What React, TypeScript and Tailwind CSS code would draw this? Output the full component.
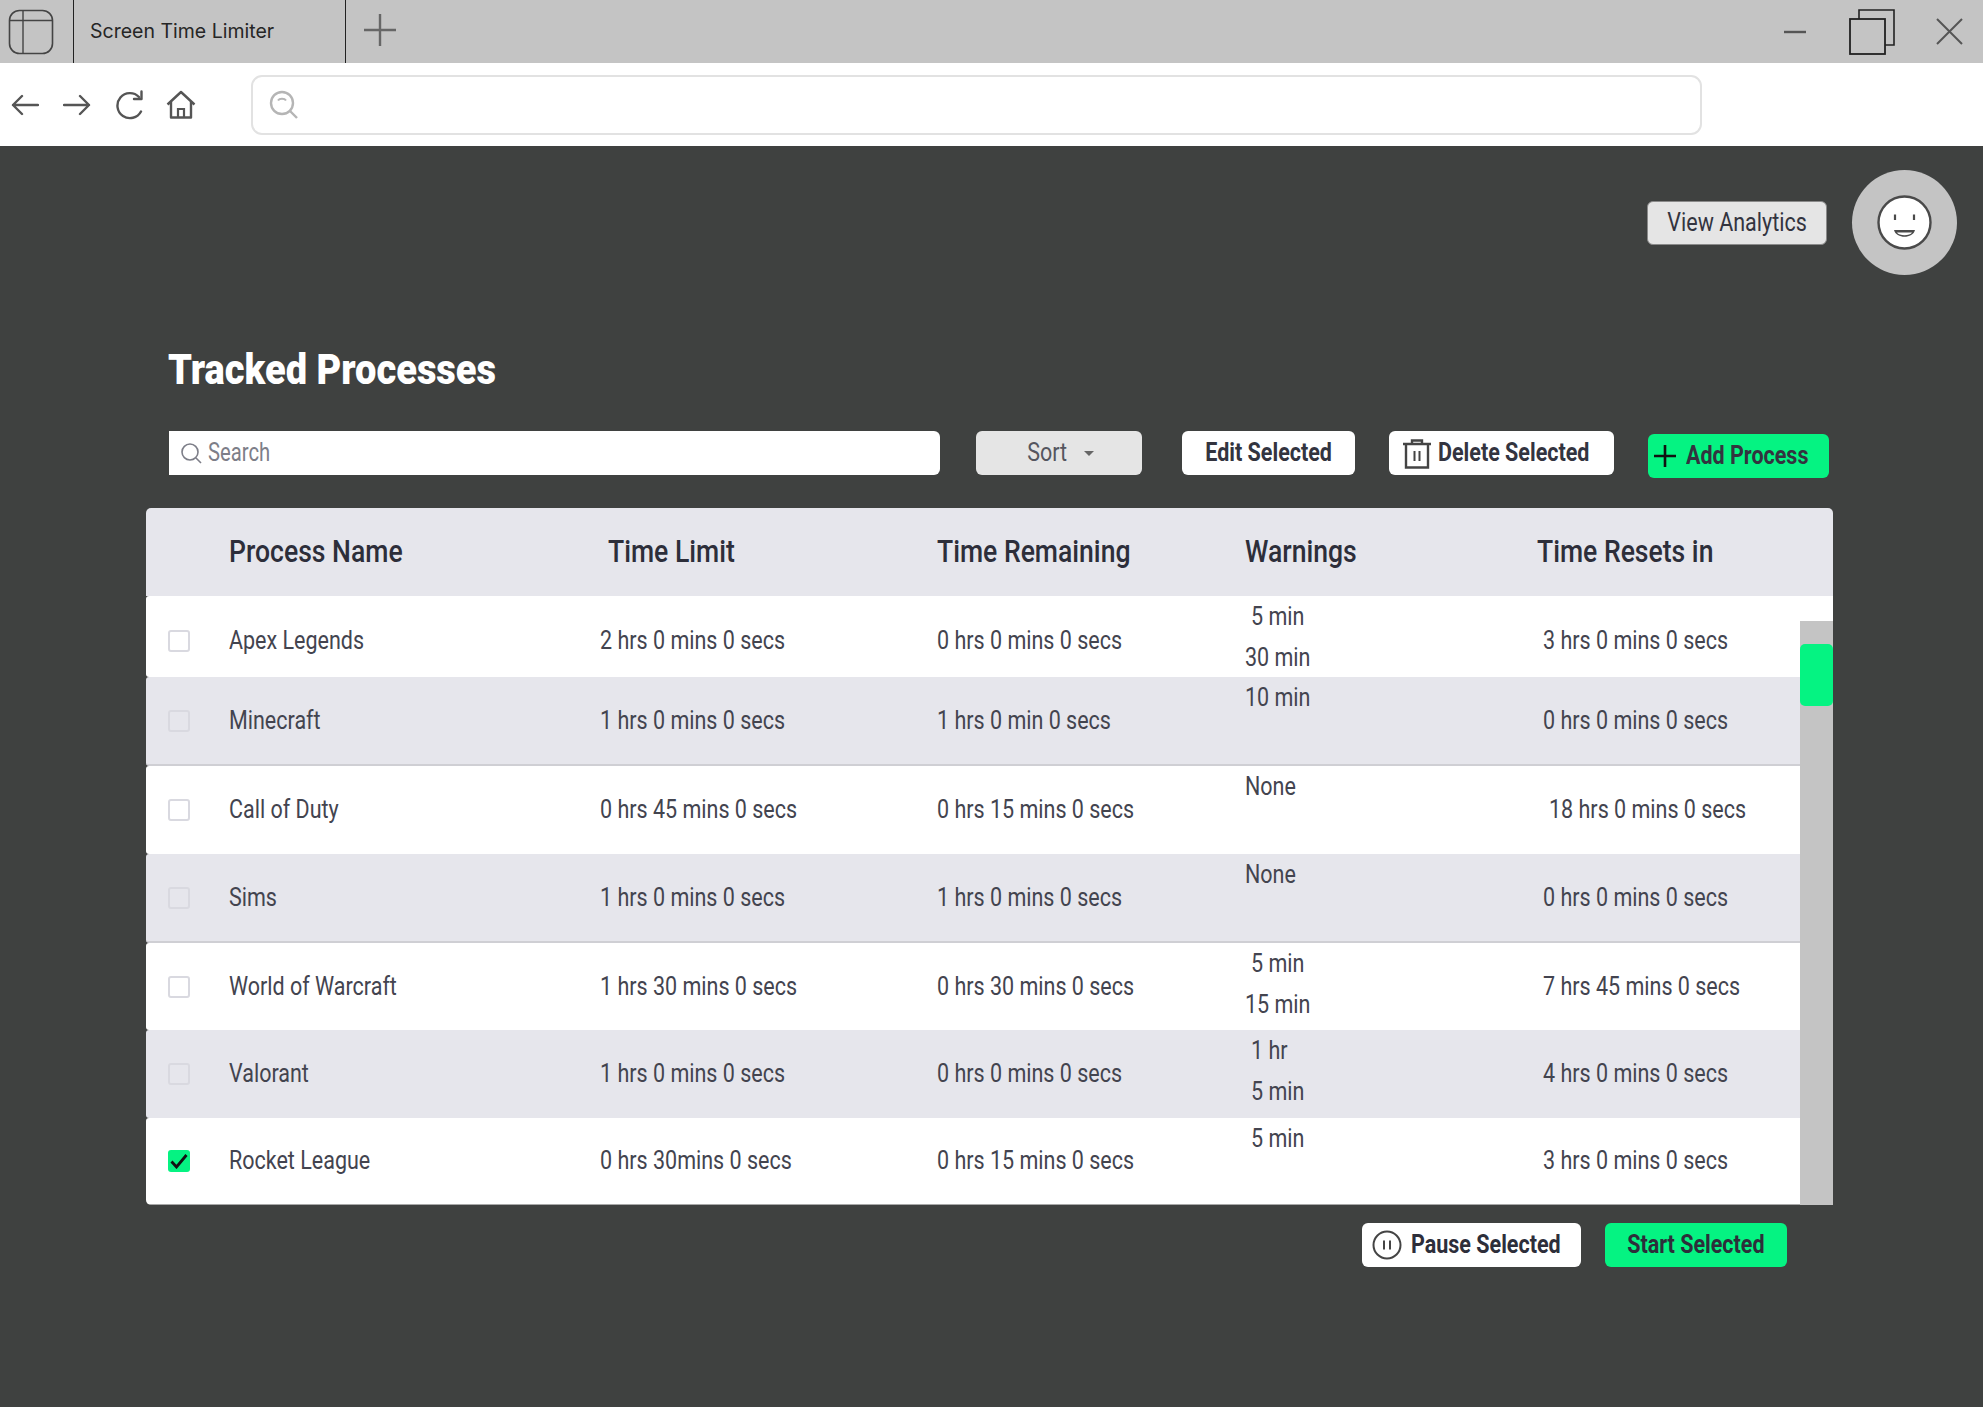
import React from "react";

const rows = [
  { name: "Apex Legends", limit: "2 hrs 0 mins 0 secs", rem: "0 hrs 0 mins 0 secs", warn: ["5 min", "30 min"], reset: "3 hrs 0 mins 0 secs", h: "h-[81px]", bg: "bg-white", drop: "pt-[8px]" },
  { name: "Minecraft", limit: "1 hrs 0 mins 0 secs", rem: "1 hrs 0 min 0 secs", warn: ["10 min"], reset: "0 hrs 0 mins 0 secs", h: "h-[89px]", bg: "bg-[#e6e6ec] border-b-2 border-[#cfcfd4]" },
  { name: "Call of Duty", limit: "0 hrs 45 mins 0 secs", rem: "0 hrs 15 mins 0 secs", warn: ["None"], reset: "18 hrs 0 mins 0 secs", h: "h-[88px]", bg: "bg-white", resetIndent: "pl-[6px]" },
  { name: "Sims", limit: "1 hrs 0 mins 0 secs", rem: "1 hrs 0 mins 0 secs", warn: ["None"], reset: "0 hrs 0 mins 0 secs", h: "h-[89px]", bg: "bg-[#e6e6ec] border-b-2 border-[#cfcfd4]" },
  { name: "World of Warcraft", limit: "1 hrs 30 mins 0 secs", rem: "0 hrs 30 mins 0 secs", warn: ["5 min", "15 min"], reset: "7 hrs 45 mins 0 secs", h: "h-[87px]", bg: "bg-white" },
  { name: "Valorant", limit: "1 hrs 0 mins 0 secs", rem: "0 hrs 0 mins 0 secs", warn: ["1 hr", "5 min"], reset: "4 hrs 0 mins 0 secs", h: "h-[88px]", bg: "bg-[#e6e6ec]" },
  { name: "Rocket League", limit: "0 hrs 30mins 0 secs", rem: "0 hrs 15 mins 0 secs", warn: ["5 min"], reset: "3 hrs 0 mins 0 secs", h: "h-[87px]", bg: "bg-white border-b border-[#a8a8a8]", checked: true },
];

const cols = "grid grid-cols-[83px_371px_337px_308px_298px_1fr]";

function Icon({ w, h, vb, className, children }: { w: number; h: number; vb: string; className?: string; children: React.ReactNode }) {
  return (
    <svg width={w} height={h} viewBox={vb} fill="none" stroke="currentColor" className={`shrink-0 ${className ?? ""}`}>
      {children}
    </svg>
  );
}

/* The reference face is a condensed one; Roboto is narrowed to its widths. */
function Row({ children }: { children: React.ReactNode }) {
  return <span className="inline-block whitespace-nowrap origin-left scale-x-[0.86]">{children}</span>;
}
function Head({ children }: { children: React.ReactNode }) {
  return <span className="inline-block whitespace-nowrap origin-left scale-x-[0.83]">{children}</span>;
}
function Btn({ children, left }: { children: React.ReactNode; left?: boolean }) {
  return <span className={`inline-block whitespace-nowrap scale-x-[0.86] ${left ? "origin-left" : "origin-center"}`}>{children}</span>;
}

export default function App() {
  return (
    <div className="flex flex-col h-[1407px] w-[1983px] overflow-hidden bg-[#3f4140] font-['Roboto',sans-serif]">
      {/* title bar */}
      <div className="h-[63px] shrink-0 bg-[#c4c4c4] flex items-center text-[#333]">
        <Icon w={46} h={46} vb="0 0 46 46" className="ml-[8px] text-[#444]">
          <rect x="1.5" y="1.5" width="43" height="43" rx="10" strokeWidth="1.6" />
          <path d="M1.5 11.5H44.5M15 1.5V44.5" strokeWidth="1.4" />
        </Icon>
        <div className="ml-[19px] h-full w-[273px] border-x border-[#222] flex items-center pl-[16px] font-['Inter',sans-serif] text-[19.5px] text-[#262626] whitespace-nowrap">
          Screen Time Limiter
        </div>
        <Icon w={32} h={32} vb="0 0 32 32" className="ml-[18px] -mt-[3px] text-[#666]">
          <path d="M16 0V32M0 16H32" strokeWidth="2.4" />
        </Icon>
        <div className="ml-auto flex items-center pr-[20px]">
          <Icon w={24} h={4} vb="0 0 24 4" className="text-[#555]">
            <path d="M1 2H23" strokeWidth="2.4" />
          </Icon>
          <Icon w={47} h={46} vb="0 0 47 46" className="ml-[42px] text-[#222]">
            <path d="M10 10V1H45V36H36" strokeWidth="1.6" />
            <rect x="1" y="10" width="35" height="35" strokeWidth="1.8" />
          </Icon>
          <Icon w={27} h={27} vb="0 0 27 27" className="ml-[40px] text-[#555]">
            <path d="M1 1L26 26M26 1L1 26" strokeWidth="2" />
          </Icon>
        </div>
      </div>

      {/* nav bar */}
      <div className="h-[83px] shrink-0 bg-white flex items-center text-[#555]">
        <Icon w={28} h={22} vb="0 0 28 22" className="ml-[11px]">
          <path d="M27 11H2M11 2L2 11L11 20" strokeWidth="2.4" strokeLinecap="round" strokeLinejoin="round" />
        </Icon>
        <Icon w={28} h={22} vb="0 0 28 22" className="ml-[24px]">
          <path d="M1 11H26M17 2L26 11L17 20" strokeWidth="2.4" strokeLinecap="round" strokeLinejoin="round" />
        </Icon>
        <Icon w={29} h={30} vb="0 0 29 30" className="ml-[24px]">
          <path d="M26 21.5A12.5 12.5 0 1 1 24 7" strokeWidth="2.4" strokeLinecap="round" />
          <path d="M26.5 1.5V9H19" strokeWidth="2.4" strokeLinecap="round" strokeLinejoin="round" />
        </Icon>
        <Icon w={30} h={29} vb="0 0 30 29" className="ml-[22px]">
          <path d="M1.5 14.5L15 2L28.5 14.5M5 12V27.5H25V12" strokeWidth="2.4" strokeLinejoin="round" />
          <path d="M12 27.5V19H18V27.5" strokeWidth="2.2" />
        </Icon>
        <div className="ml-[55px] w-[1451px] h-[60px] rounded-[11px] border-2 border-[#e2e2e2] flex items-center pl-[16px] text-[#b5b5b5]">
          <Icon w={29} h={29} vb="0 0 29 29">
            <circle cx="13" cy="13" r="11" strokeWidth="2.4" />
            <path d="M21 21L28 28" strokeWidth="2.4" />
            <path d="M9 10.5C10.5 8 15.5 8 17 10.5" strokeWidth="2" />
          </Icon>
        </div>
      </div>

      {/* main */}
      <div className="flex flex-col flex-1">
        <div className="flex justify-end items-center pt-[24px] pr-[26px] gap-[25px]">
          <button className="w-[180px] h-[44px] rounded-[6px] bg-[#e5e5e5] border border-[#8a8a8a] text-[#33343f] text-[25px]"><Btn>View Analytics</Btn></button>
          <div className="w-[105px] h-[105px] rounded-full bg-[#c4c4c4] flex items-center justify-center">
            <Icon w={55} h={55} vb="0 0 55 55" className="text-[#4a4a4a]">
              <circle cx="27.5" cy="27.5" r="26" fill="#fff" strokeWidth="2.4" />
              <path d="M18 19.5V25M37 19.5V25" strokeWidth="2.2" />
              <path d="M17 35H38C36 44 19 44 17 35Z" fill="#4a4a4a" stroke="none" />
              <path d="M20 37.5H35C33 41 22 41 20 37.5Z" fill="#fff" stroke="none" />
            </Icon>
          </div>
        </div>

        <h1 className="ml-[168px] mt-[70px] h-[50px] leading-[50px] text-[42px] font-black text-white">
          <span className="inline-block whitespace-nowrap origin-left scale-x-[0.905]">Tracked Processes</span>
        </h1>

        <div className="mt-[36px] pl-[169px] flex items-start text-[#33343f]">
          <div className="w-[771px] h-[44px] rounded-r-[6px] bg-white flex items-center pl-[11px] gap-[6px] text-[#7d7e88] text-[25px]">
            <Icon w={22} h={22} vb="0 0 22 22">
              <circle cx="10" cy="10" r="8" strokeWidth="1.6" />
              <path d="M16 16L21 21" strokeWidth="1.6" />
            </Icon>
            <span className="inline-block whitespace-nowrap origin-left scale-x-[0.81]">Search</span>
          </div>
          <button className="ml-[36px] w-[166px] h-[44px] rounded-[6px] bg-[#e5e5e5] text-[#55565f] text-[25px] flex items-center justify-center gap-[13px]">
            <Btn>Sort</Btn>
            <span className="w-0 h-0 border-x-[5px] border-x-transparent border-t-[5px] border-t-[#666]" />
          </button>
          <button className="ml-[40px] w-[173px] h-[44px] rounded-[6px] bg-white text-[25px] font-bold"><Btn>Edit Selected</Btn></button>
          <button className="ml-[34px] w-[225px] h-[44px] rounded-[6px] bg-white text-[25px] font-bold flex items-center pl-[13px] gap-[6px]">
            <Icon w={30} h={31} vb="0 0 30 31" className="text-[#444]">
              <path d="M1 6H29M10 6V2.5H20V6M4 6V29.5H26V6" strokeWidth="2.4" />
              <path d="M12.5 13V23M17.5 13V23" strokeWidth="2" />
            </Icon>
            <Btn left>Delete Selected</Btn>
          </button>
          <button className="ml-[34px] mt-[3px] w-[181px] h-[44px] rounded-[6px] bg-[#05f382] text-[25px] font-bold flex items-center pl-[6px] gap-[10px]">
            <Icon w={22} h={22} vb="0 0 22 22" className="text-[#111]">
              <path d="M11 0V22M0 11H22" strokeWidth="2.6" />
            </Icon>
            <Btn left>Add Process</Btn>
          </button>
        </div>

        <div className="relative mt-[30px] ml-[146px] w-[1687px] rounded-t-[5px] rounded-bl-[5px] overflow-hidden">
          <div className={`${cols} h-[88px] pb-[2px] items-center bg-[#e6e6ec] text-[#2d2e3a] text-[32px] font-medium`}>
            <div />
            <div><Head>Process Name</Head></div>
            <div className="pl-[8px]"><Head>Time Limit</Head></div>
            <div><Head>Time Remaining</Head></div>
            <div><Head>Warnings</Head></div>
            <div className="-ml-[6px]"><Head>Time Resets in</Head></div>
          </div>
          {rows.map((r) => (
            <div key={r.name} className={`${cols} ${r.h} ${r.bg} rounded-l-[3px] items-center text-[#43444f] text-[25px]`}>
              <div className={`pl-[22px] ${r.drop ?? ""}`}>
                {r.checked ? (
                  <div className="w-[22px] h-[22px] rounded-[3px] bg-[#05f382] flex items-center justify-center">
                    <Icon w={18} h={16} vb="0 0 18 16" className="text-[#111]">
                      <path d="M1.5 8.5L6.5 14L16.5 2" strokeWidth="2.8" />
                    </Icon>
                  </div>
                ) : (
                  <div className="w-[22px] h-[22px] rounded-[3px] border-2 border-[#d9d9e0]" />
                )}
              </div>
              <div className={r.drop ?? ""}><Row>{r.name}</Row></div>
              <div className={r.drop ?? ""}><Row>{r.limit}</Row></div>
              <div className={r.drop ?? ""}><Row>{r.rem}</Row></div>
              <div className="self-start leading-[41px]">
                {r.warn.map((w) => (
                  <div key={w} className={w === "5 min" || w === "1 hr" ? "h-[41px] pl-[6px]" : "h-[41px]"}><Row>{w}</Row></div>
                ))}
              </div>
              <div className={`${r.resetIndent ?? ""} ${r.drop ?? ""}`}><Row>{r.reset}</Row></div>
            </div>
          ))}
          <div className="absolute right-0 top-[113px] bottom-0 w-[33px] bg-[#c4c4c4]">
            <div className="mt-[23px] h-[62px] rounded-[5px] bg-[#05f382]" />
          </div>
        </div>

        <div className="mt-[18px] flex justify-end pr-[196px] gap-[24px] text-[#2d2e3a] text-[25px] font-bold">
          <button className="w-[219px] h-[44px] rounded-[6px] bg-white flex items-center pl-[10px] gap-[9px]">
            <Icon w={30} h={30} vb="0 0 30 30" className="text-[#444]">
              <circle cx="15" cy="15" r="13.5" strokeWidth="2" />
              <path d="M12 10.5V19.5M18 10.5V19.5" strokeWidth="2" />
            </Icon>
            <Btn left>Pause Selected</Btn>
          </button>
          <button className="w-[182px] h-[44px] rounded-[6px] bg-[#05f382]"><Btn>Start Selected</Btn></button>
        </div>
      </div>
    </div>
  );
}
